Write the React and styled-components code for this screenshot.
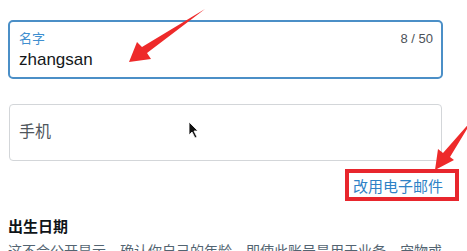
import React from "react";
import styled, { createGlobalStyle } from "styled-components";

const GlobalStyle = createGlobalStyle`
  html, body {
    margin: 0;
    padding: 0;
    background: #ffffff;
  }
  body {
    font-family: "Liberation Sans", "Noto Sans CJK SC", sans-serif;
    color: #14171a;
  }
`;

const Page = styled.div`
  position: relative;
  width: 467px;
  height: 251px;
  overflow: hidden;
  padding: 20px 0 0 8px;
  box-sizing: border-box;
`;

const Form = styled.div`
  width: 435px;
  display: flex;
  flex-direction: column;
`;

const Field = styled.div`
  box-sizing: border-box;
  height: ${(props) => (props.$focused ? "59px" : "57px")};
  margin-left: ${(props) => (props.$focused ? "0" : "1px")};
  width: ${(props) => (props.$focused ? "435px" : "433px")};
  border: ${(props) =>
    props.$focused ? "2px solid #4b8fc7" : "1px solid #d3d6d9"};
  border-radius: ${(props) => (props.$focused ? "5px" : "4px")};
  padding: ${(props) => (props.$focused ? "10px 8px 0 9px" : "0 0 0 9px")};
  display: flex;
  flex-direction: column;
  justify-content: ${(props) => (props.$focused ? "flex-start" : "center")};
  margin-bottom: 25px;
`;

const FieldTop = styled.div`
  display: flex;
  justify-content: space-between;
  align-items: center;
  height: 14px;
`;

const Label = styled.span`
  font-size: 13px;
  line-height: 14px;
  color: #3f8fd0;
`;

const Counter = styled.span`
  font-size: 13px;
  line-height: 14px;
  color: #4b5258;
`;

const Value = styled.div`
  margin-top: 4px;
  font-size: 17px;
  line-height: 20px;
  color: #14171a;
`;

const Placeholder = styled.div`
  font-size: 16px;
  line-height: 20px;
  color: #4f565c;
  margin-top: -1px;
`;

const LinkRow = styled.div`
  display: flex;
  justify-content: flex-end;
  margin-top: -8px;
`;

const LinkWrap = styled.span`
  position: relative;
  display: inline-block;
`;

const Link = styled.a`
  font-size: 15px;
  line-height: 18px;
  color: #2f82c6;
  text-decoration: none;
`;

const RedBox = styled.span`
  position: absolute;
  left: -8px;
  right: -16px;
  top: -9px;
  bottom: -5px;
  border: 4px solid #e8262d;
  pointer-events: none;
`;

const Heading = styled.div`
  margin-top: 22px;
  font-size: 15px;
  line-height: 18px;
  font-weight: 700;
  color: #0f1419;
`;

const Hint = styled.div`
  margin-top: 5px;
  font-size: 14px;
  line-height: 20px;
  color: #536471;
`;

const Overlay = styled.svg`
  position: absolute;
  left: 0;
  top: 0;
  pointer-events: none;
`;

const App = () => {
  return (
    <>
      <GlobalStyle />
      <Page>
        <Form>
          <Field $focused>
            <FieldTop>
              <Label>名字</Label>
              <Counter>8 / 50</Counter>
            </FieldTop>
            <Value>zhangsan</Value>
          </Field>
          <Field>
            <Placeholder>手机</Placeholder>
          </Field>
          <LinkRow>
            <LinkWrap>
              <Link href="#">改用电子邮件</Link>
              <RedBox />
            </LinkWrap>
          </LinkRow>
          <Heading>出生日期</Heading>
          <Hint>这不会公开显示。确认你自己的年龄，即使此账号是用于业务、宠物或其他内容。</Hint>
        </Form>
        <Overlay width="467" height="251" viewBox="0 0 467 251">
          {/* arrow pointing at the name */}
          <polygon
            points="205,9 147,53 151,59 129,62 137,42 142,47"
            fill="#ee2a2a"
          />
          {/* arrow pointing at the email link */}
          <polygon
            points="473,119 450,157 454,160 435,170 438,149 443,153"
            fill="#ee2a2a"
          />
          {/* mouse cursor */}
          <polygon
            points="189,122 189,135 192,132 195,138 197,137 194,131 198,131"
            fill="#111"
            stroke="#fff"
            strokeWidth="0.8"
          />
        </Overlay>
      </Page>
    </>
  );
};

export default App;
